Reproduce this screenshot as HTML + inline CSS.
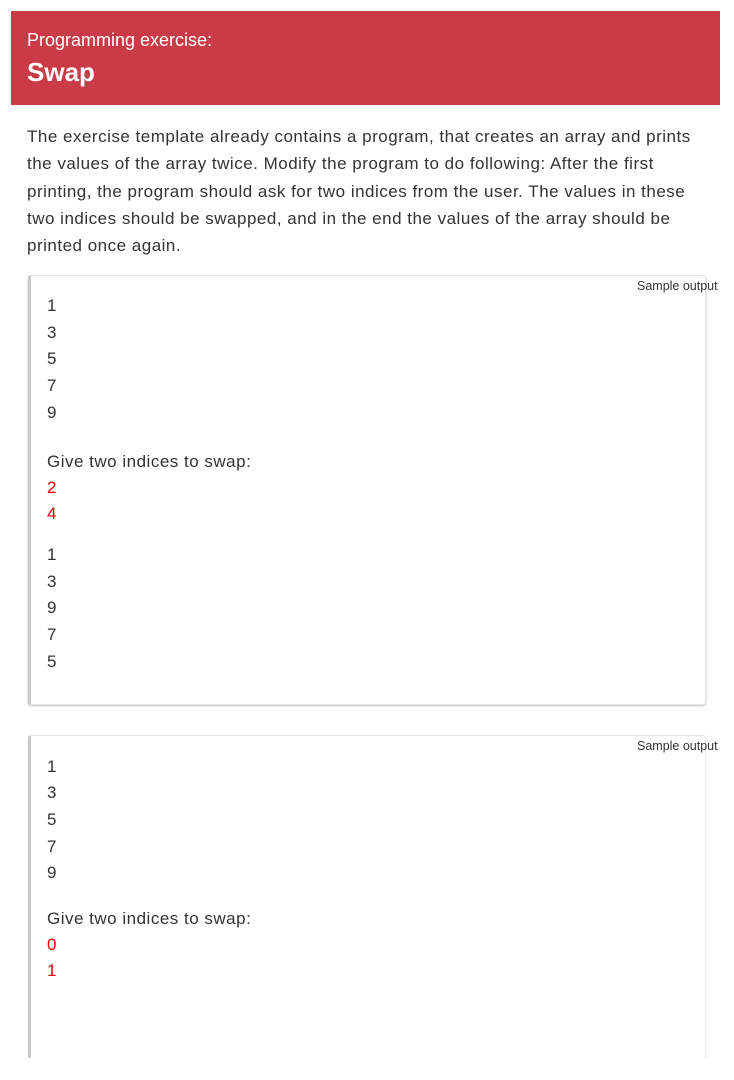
<!DOCTYPE html>
<html><head><style>
body{margin:0;background:#fff;font-family:"Liberation Sans",sans-serif;width:734px;height:1080px;overflow:hidden;position:relative}
.hdr{position:absolute;left:11px;top:11px;width:709px;height:94px;background:#cb3a47;color:#fff}
.hdr .a{position:absolute;left:16px;top:19px;font-size:18px}
.hdr .b{position:absolute;left:16px;top:46px;font-size:26px;font-weight:bold}
.p{position:absolute;left:27px;top:123px;width:720px;font-size:17px;letter-spacing:0.5px;line-height:27.3px;color:#333;white-space:nowrap}
.box{position:absolute;left:28px;width:674px;border:1px solid #e6e6e6;border-left:3px solid #c8c8c8;border-radius:3px;box-shadow:0 1px 2px rgba(0,0,0,.25);background:#fff}
.lab{position:absolute;left:637px;font-size:12.5px;color:#333}
.ln{position:absolute;left:47px;font-size:17px;letter-spacing:0.5px;color:#333}
.r{color:#e00}
</style></head><body>
<div class="hdr"><div class="a">Programming exercise:</div><div class="b">Swap</div></div>
<div class="p">The exercise template already contains a program, that creates an array and prints<br>the values of the array twice. Modify the program to do following: After the first<br>printing, the program should ask for two indices from the user. The values in these<br>two indices should be swapped, and in the end the values of the array should be<br>printed once again.</div>
<div class="box" style="top:275px;height:428px"></div>
<div class="lab" style="top:279px">Sample output</div>
<div class="ln" style="top:296px">1</div>
<div class="ln" style="top:323px">3</div>
<div class="ln" style="top:349px">5</div>
<div class="ln" style="top:376px">7</div>
<div class="ln" style="top:403px">9</div>
<div class="ln" style="top:452px">Give two indices to swap:</div>
<div class="ln r" style="top:478px">2</div>
<div class="ln r" style="top:504px">4</div>
<div class="ln" style="top:545px">1</div>
<div class="ln" style="top:572px">3</div>
<div class="ln" style="top:598px">9</div>
<div class="ln" style="top:625px">7</div>
<div class="ln" style="top:652px">5</div>
<div class="box" style="top:735px;height:340px;box-shadow:none"></div>
<div class="lab" style="top:739px">Sample output</div>
<div class="ln" style="top:757px">1</div>
<div class="ln" style="top:783px">3</div>
<div class="ln" style="top:810px">5</div>
<div class="ln" style="top:837px">7</div>
<div class="ln" style="top:863px">9</div>
<div class="ln" style="top:909px">Give two indices to swap:</div>
<div class="ln r" style="top:935px">0</div>
<div class="ln r" style="top:961px">1</div>
<div style="position:absolute;left:0;top:1058px;width:734px;height:22px;background:#fff"></div>
</body></html>
